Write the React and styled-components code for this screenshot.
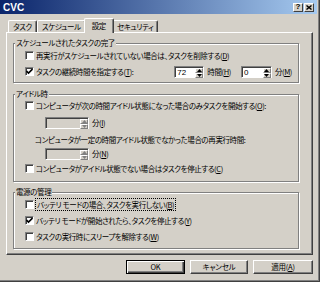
import React from 'react';
import styled, { createGlobalStyle, css } from 'styled-components';

const GlobalStyle = createGlobalStyle`
  * { box-sizing: border-box; }
  html, body { margin: 0; padding: 0; background: #d4d0c8; }
  body {
    font-family: "Noto Sans CJK JP", "Noto Sans", sans-serif;
    font-size: 7.5px;
    letter-spacing: -0.4px;
    color: #000;
    font-feature-settings: "palt";
  }
`;

const Window = styled.div`
  width: 320px;
  height: 282px;
  display: flex;
  flex-direction: column;
  background: #d4d0c8;
  padding: 0 3px 3px 0;
  box-shadow: inset -1px -1px 0 #404040, inset -2px -2px 0 #808080;
  overflow: hidden;
`;

const TitleBar = styled.div`
  height: 14px;
  flex: none;
  display: flex;
  align-items: center;
  justify-content: space-between;
  padding: 0 3px;
  background: linear-gradient(to right, #0a246a, #a6caf0);
`;

const Title = styled.span`
  font-family: "Liberation Sans", Arial, sans-serif;
  font-weight: bold;
  font-size: 10px;
  letter-spacing: 0;
  color: #fff;
`;

const Caption = styled.div`
  display: flex;
  gap: 1px;
`;

const CaptionButton = styled.span`
  width: 10px;
  height: 9px;
  display: flex;
  align-items: center;
  justify-content: center;
  background: #d4d0c8;
  border: 1px solid;
  border-color: #fff #404040 #404040 #fff;
  font-family: "Liberation Sans", Arial, sans-serif;
  font-weight: bold;
  font-size: 8px;
  letter-spacing: 0;
  line-height: 1;
`;

const Body = styled.div`
  flex: 1;
  display: flex;
  flex-direction: column;
  padding: 0 4px 0 6px;
`;

const TabStrip = styled.div`
  height: 18px;
  flex: none;
  display: flex;
  align-items: flex-end;
  padding-left: 2px;
`;

const Tab = styled.span`
  height: 12px;
  padding: 0 4px;
  display: flex;
  align-items: center;
  background: #d4d0c8;
  border-top: 1px solid #fff;
  border-left: 1px solid #fff;
  border-right: 1px solid #404040;
  box-shadow: inset -1px 0 0 #808080;
  border-radius: 2px 2px 0 0;
  white-space: nowrap;
  ${p => p.$active && css`
    height: 15px;
    margin: 0 -2px -1px;
    padding: 0 7px 2px;
    position: relative;
    z-index: 1;
  `}
`;

const Panel = styled.div`
  height: 223px;
  flex: none;
  display: flex;
  flex-direction: column;
  padding: 5px 13px 0 6px;
  border: 1px solid;
  border-color: #fff #404040 #404040 #fff;
  box-shadow: inset -1px -1px 0 #808080;
`;

const Group = styled.fieldset`
  margin: 0 0 ${p => p.$mb || 0}px;
  padding: 0 6px ${p => p.$pb || 0}px 11px;
  min-width: 0;
  border: 1px solid #808080;
  box-shadow: inset 1px 1px 0 #fff, 1px 1px 0 #fff;
`;

const Legend = styled.legend`
  margin-left: -10px;
  padding: 0 1px;
  line-height: 10px;
  background: #d4d0c8;
`;

const Row = styled.div`
  height: 13px;
  display: flex;
  align-items: center;
  white-space: nowrap;
  margin-top: ${p => p.$mt || 0}px;
  margin-left: ${p => p.$indent || 0}px;
`;

const Box = styled.span`
  width: 9px;
  height: 9px;
  flex: none;
  display: flex;
  align-items: center;
  justify-content: center;
  margin-right: 2px;
  background: #fff;
  border: 1px solid;
  border-color: #808080 #fff #fff #808080;
  box-shadow: inset 1px 1px 0 #404040;
`;

const Focus = styled.span`
  outline: 1px dotted #000;
  outline-offset: 0;
  padding: 0 1px;
`;

const Controls = styled.div`
  margin-left: auto;
  display: flex;
  align-items: center;
`;

const Unit = styled.span`
  margin: 0 ${p => p.$mr || 0}px 0 3px;
`;

const Spin = styled.span`
  width: ${p => p.$w}px;
  height: 12px;
  flex: none;
  display: flex;
  border: 1px solid;
  border-color: #808080 #fff #fff #808080;
  box-shadow: inset 1px 1px 0 #404040;
  background: ${p => (p.$disabled ? '#d4d0c8' : '#fff')};
`;

const SpinValue = styled.span`
  flex: 1;
  padding: 1px 0 0 2px;
  font-family: "Liberation Sans", Arial, sans-serif;
  font-size: 8px;
  letter-spacing: 0;
  line-height: 9px;
`;

const SpinButtons = styled.span`
  width: 8px;
  display: flex;
  flex-direction: column;
  margin: 1px 0 0;
`;

const SpinButton = styled.span`
  flex: 1;
  display: flex;
  align-items: center;
  justify-content: center;
  background: #d4d0c8;
  border-top: 1px solid #fff;
  border-left: 1px solid #fff;
  border-right: 1px solid #808080;
  border-bottom: 1px solid #808080;
`;

const ButtonRow = styled.div`
  display: flex;
  justify-content: flex-end;
  gap: 5px;
  margin-top: 5px;
`;

const Button = styled.button`
  width: ${p => p.$w || 58}px;
  height: 14px;
  padding: 0;
  font-family: "Noto Sans CJK JP", "Noto Sans", sans-serif;
  font-size: 7.5px;
  font-feature-settings: "palt";
  letter-spacing: -0.2px;
  line-height: 1;
  color: #000;
  background: #d4d0c8;
  border: 1px solid;
  border-color: #fff #404040 #404040 #fff;
  box-shadow: inset -1px -1px 0 #808080;
  ${p => p.$default && css`
    border-color: #000;
    box-shadow: inset 1px 1px 0 #fff, inset -1px -1px 0 #404040, inset -2px -2px 0 #808080;
  `}
`;

const Check = ({ checked }) => (
  <Box>
    {checked && (
      <svg width="7" height="7" viewBox="0 0 7 7">
        <path d="M0.5 3 L2.5 5 L6.5 1" fill="none" stroke="#000" strokeWidth="1.6" />
      </svg>
    )}
  </Box>
);

const Arrow = ({ up, color }) => (
  <svg width="5" height="3" viewBox="0 0 5 3">
    <path d={up ? 'M0 3 L2.5 0 L5 3 Z' : 'M0 0 L5 0 L2.5 3 Z'} fill={color} />
  </svg>
);

const SpinBox = ({ value, width, disabled }) => (
  <Spin $w={width} $disabled={disabled}>
    <SpinValue>{value}</SpinValue>
    <SpinButtons>
      <SpinButton><Arrow up color={disabled ? '#808080' : '#000'} /></SpinButton>
      <SpinButton><Arrow color={disabled ? '#808080' : '#000'} /></SpinButton>
    </SpinButtons>
  </Spin>
);

const tabs = ['タスク', 'スケジュール', '設定', 'セキュリティ'];

export default function App() {
  return (
    <>
      <GlobalStyle />
      <Window>
        <TitleBar>
          <Title>CVC</Title>
          <Caption>
            <CaptionButton>?</CaptionButton>
            <CaptionButton>
              <svg width="6" height="5" viewBox="0 0 6 5">
                <path d="M0.5 0.5 L5.5 4.5 M5.5 0.5 L0.5 4.5" stroke="#000" strokeWidth="1.4" />
              </svg>
            </CaptionButton>
          </Caption>
        </TitleBar>
        <Body>
          <TabStrip>
            {tabs.map(t => (
              <Tab key={t} $active={t === '設定'}>{t}</Tab>
            ))}
          </TabStrip>
          <Panel>
            <Group $pb={4} $mb={6}>
              <Legend>スケジュールされたタスクの完了</Legend>
              <Row $mt={1}>
                <Check />
                再実行がスケジュールされていない場合は、タスクを削除する(<u>D</u>)
              </Row>
              <Row $mt={3}>
                <Check checked />
                タスクの継続時間を指定する(<u>T</u>):
                <Controls>
                  <SpinBox value="72" width={30} />
                  <Unit $mr={10}>時間(<u>H</u>)</Unit>
                  <SpinBox value="0" width={31} />
                  <Unit>分(<u>M</u>)</Unit>
                </Controls>
              </Row>
            </Group>
            <Group $pb={6} $mb={5}>
              <Legend>アイドル時</Legend>
              <Row>
                <Check />
                コンピュータが次の時間アイドル状態になった場合のみタスクを開始する(<u>O</u>):
              </Row>
              <Row $mt={4} $indent={20}>
                <SpinBox width={44} disabled />
                <Unit>分(<u>I</u>)</Unit>
              </Row>
              <Row $mt={4} $indent={10}>
                コンピュータが一定の時間アイドル状態でなかった場合の再実行時間:
              </Row>
              <Row $mt={1} $indent={20}>
                <SpinBox width={44} disabled />
                <Unit>分(<u>N</u>)</Unit>
              </Row>
              <Row $mt={2}>
                <Check />
                コンピュータがアイドル状態でない場合はタスクを停止する(<u>C</u>)
              </Row>
            </Group>
            <Group $pb={5}>
              <Legend>電源の管理</Legend>
              <Row $mt={1}>
                <Check />
                <Focus>バッテリ モードの場合、タスクを実行しない(<u>B</u>)</Focus>
              </Row>
              <Row $mt={3}>
                <Check checked />
                バッテリ モードが開始されたら、タスクを停止する(<u>Y</u>)
              </Row>
              <Row $mt={3}>
                <Check />
                タスクの実行時にスリープを解除する(<u>W</u>)
              </Row>
            </Group>
          </Panel>
          <ButtonRow>
            <Button $default $w={59}>OK</Button>
            <Button>キャンセル</Button>
            <Button $w={60}>適用(<u>A</u>)</Button>
          </ButtonRow>
        </Body>
      </Window>
    </>
  );
}
